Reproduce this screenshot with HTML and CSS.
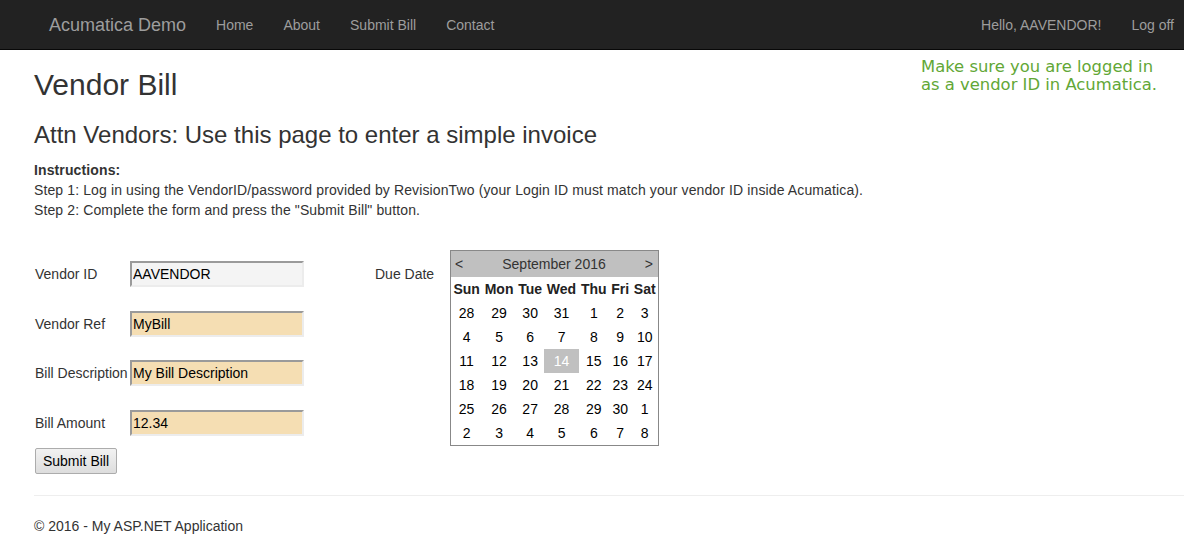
FILE: index.html
```html
<!DOCTYPE html>
<html>
<head>
<meta charset="utf-8">
<link rel="stylesheet" href="styles.css">
</head>
<body>
<header class="navbar">
  <div class="nav-left">
    <a class="brand">Acumatica Demo</a>
    <a class="nav-link">Home</a>
    <a class="nav-link">About</a>
    <a class="nav-link">Submit Bill</a>
    <a class="nav-link">Contact</a>
  </div>
  <div class="nav-right">
    <a class="nav-link">Hello, AAVENDOR!</a>
    <a class="nav-link">Log off</a>
  </div>
</header>
<main class="content">
  <div class="note">Make sure you are logged in as a vendor ID in Acumatica.</div>
  <h2 class="title">Vendor Bill</h2>
  <h3 class="subtitle">Attn Vendors: Use this page to enter a simple invoice</h3>
  <p class="instructions">
    <b>Instructions:</b><br>
    Step 1: Log in using the VendorID/password provided by RevisionTwo (your Login ID must match your vendor ID inside Acumatica).<br>
    Step 2: Complete the form and press the "Submit Bill" button.
  </p>
  <div class="form-area">
    <div class="fields">
      <div class="row"><label class="lbl">Vendor ID</label><input class="inp readonly" value="AAVENDOR" readonly></div>
      <div class="row"><label class="lbl">Vendor Ref</label><input class="inp" value="MyBill"></div>
      <div class="row"><label class="lbl">Bill Description</label><input class="inp" value="My Bill Description"></div>
      <div class="row"><label class="lbl">Bill Amount</label><input class="inp" value="12.34"></div>
      <button class="btn">Submit Bill</button>
    </div>
    <div class="due-label">Due Date</div>
    <table class="cal">
      <tr><td colspan="7" class="cal-title"><div class="cal-head"><span>&lt;</span><span>September 2016</span><span>&gt;</span></div></td></tr>
      <tr class="dow"><th>Sun</th><th>Mon</th><th>Tue</th><th>Wed</th><th>Thu</th><th>Fri</th><th>Sat</th></tr>
      <tr><td>28</td><td>29</td><td>30</td><td>31</td><td>1</td><td>2</td><td>3</td></tr>
      <tr><td>4</td><td>5</td><td>6</td><td>7</td><td>8</td><td>9</td><td>10</td></tr>
      <tr><td>11</td><td>12</td><td>13</td><td class="today">14</td><td>15</td><td>16</td><td>17</td></tr>
      <tr><td>18</td><td>19</td><td>20</td><td>21</td><td>22</td><td>23</td><td>24</td></tr>
      <tr><td>25</td><td>26</td><td>27</td><td>28</td><td>29</td><td>30</td><td>1</td></tr>
      <tr><td>2</td><td>3</td><td>4</td><td>5</td><td>6</td><td>7</td><td>8</td></tr>
    </table>
  </div>
  <footer class="footer">
    <p>&copy; 2016 - My ASP.NET Application</p>
  </footer>
</main>
</body>
</html>
```
FILE: styles.css
```css
html, body {
  margin: 0;
  padding: 0;
  background: #fff;
}
body {
  font-family: "Liberation Sans", Arial, Helvetica, sans-serif;
  font-size: 14px;
  line-height: 20px;
  color: #333;
  overflow: hidden;
}
.navbar {
  height: 49px;
  background: #222;
  border-bottom: 1px solid #080808;
  display: flex;
  justify-content: space-between;
  align-items: center;
}
.nav-left, .nav-right {
  display: flex;
  align-items: center;
}
.nav-left {
  padding-left: 34px;
}
.nav-right {
  margin-right: -5px;
}
.brand {
  font-size: 18px;
  color: #9d9d9d;
  padding: 0 15px;
  line-height: 50px;
}
.nav-link {
  color: #9d9d9d;
  padding: 0 15px;
  line-height: 50px;
}
.content {
  padding: 0 0 0 34px;
  display: flow-root;
}
.note {
  float: right;
  width: 250px;
  margin: 8px 13px 0 0;
  font-family: "DejaVu Sans", Verdana, sans-serif;
  font-size: 16.4px;
  line-height: 18px;
  color: #62a736;
}
.title {
  font-size: 30px;
  font-weight: 500;
  line-height: 33px;
  margin: 18px 0 0 0;
}
.subtitle {
  font-size: 24px;
  font-weight: 500;
  line-height: 26.4px;
  margin: 21px 0 10px 0;
}
.instructions {
  margin: 0;
  padding-top: 2px;
  font-size: 14px;
  letter-spacing: 0.12px;
}
.form-area {
  display: flex;
  align-items: flex-start;
  margin-top: 30px;
}
.fields {
  padding-top: 11px;
  width: 341px;
  display: flex;
  flex-direction: column;
  align-items: flex-start;
}
.row {
  display: flex;
  align-items: center;
  height: 26px;
  margin-bottom: 24px;
}
.row:nth-child(2) {
  margin-bottom: 23px;
}
.row:nth-child(4) {
  margin-bottom: 12px;
}
.lbl {
  width: 95px;
  padding-left: 1px;
  white-space: nowrap;
}
.inp {
  box-sizing: border-box;
  width: 174px;
  height: 26px;
  padding: 0 1px;
  margin: 0;
  font-family: "Liberation Sans", Arial, sans-serif;
  font-size: 14px;
  color: #000;
  background: #f5deb3;
  border-style: solid;
  border-width: 2px;
  border-color: #9a9a9a #ececec #ececec #9a9a9a;
  outline: none;
}
.inp.readonly {
  background: #f4f4f4;
}
.btn {
  margin-left: 1px;
  height: 26px;
  width: 82px;
  padding: 0;
  font-family: "Liberation Sans", Arial, sans-serif;
  font-size: 14px;
  color: #000;
  background: linear-gradient(#f2f2f2, #dddddd);
  border: 1px solid #acacac;
  border-radius: 2px;
}
.due-label {
  padding-top: 11px;
  line-height: 26px;
  width: 75px;
}
.cal {
  border-collapse: collapse;
  border: 1px solid #888;
  width: 209px;
  font-size: 14px;
  color: #000;
}
.cal td, .cal th {
  padding: 0 2px;
  height: 24px;
  text-align: center;
  line-height: 24px;
}
.cal .cal-title {
  background: #c0c0c0;
  height: 26px;
  padding: 0;
  color: #333;
}
.cal-head {
  display: flex;
  justify-content: space-between;
  padding: 0 5px 0 4px;
  line-height: 26px;
}
.cal th {
  font-weight: bold;
  color: #222;
}
.cal .today {
  background: #c0c0c0;
  color: #fff;
}
.footer {
  border-top: 1px solid #eee;
  margin-top: 21px;
  width: 1200px;
}
.footer p {
  margin: 20px 0 0 0;
  font-size: 14px;
}
```
